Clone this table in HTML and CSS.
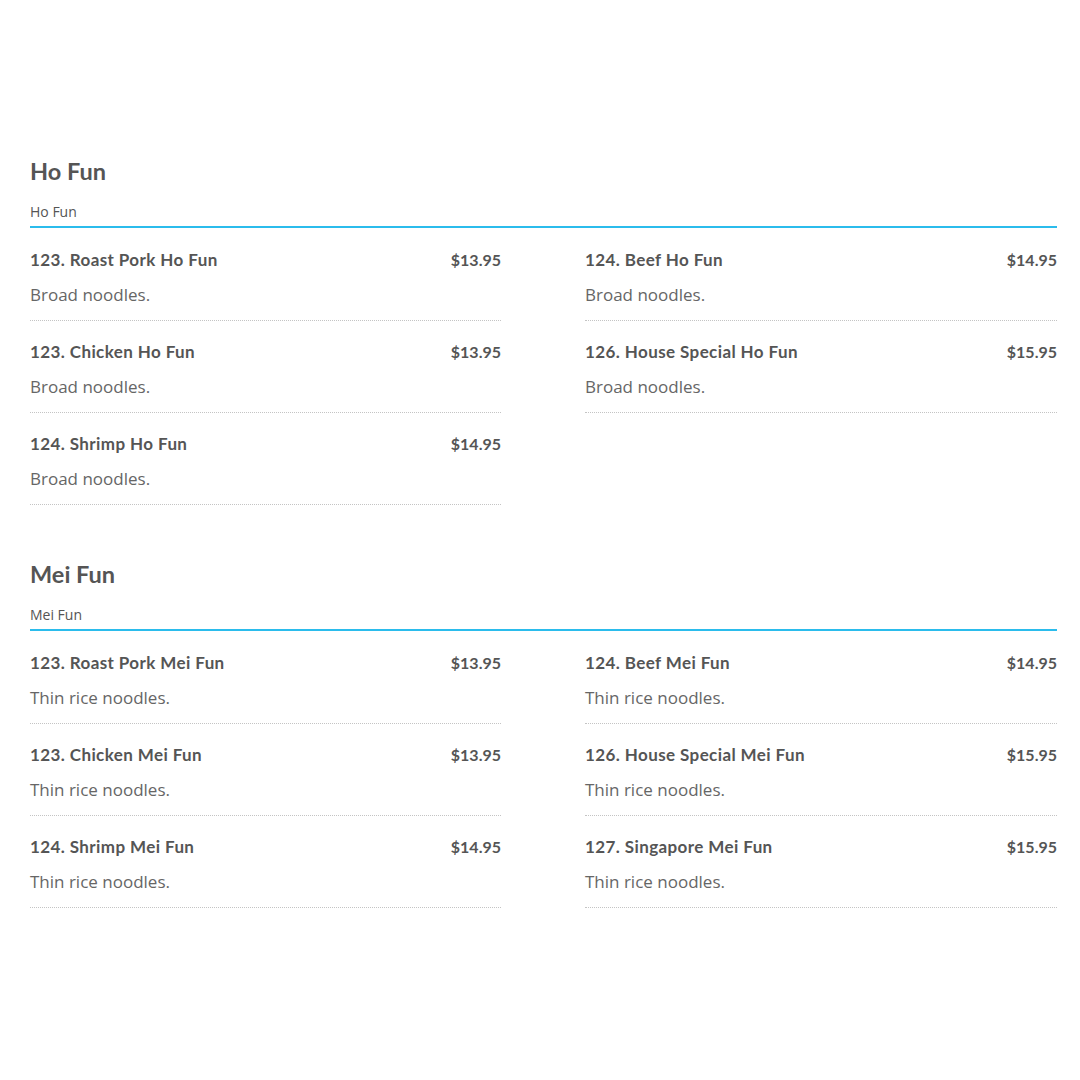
FILE: index.html
```html
<!DOCTYPE html>
<html>
<head>
<meta charset="utf-8">
<link rel="stylesheet" href="styles.css">
</head>
<body>
<main class="menu">
  <section class="category">
    <header class="cat-head">
      <h2 class="cat-title">Ho Fun</h2>
      <p class="cat-sub">Ho Fun</p>
    </header>
    <div class="items">
      <div class="item"><div class="item-top"><span class="item-name">123. Roast Pork Ho Fun</span><span class="item-price">$13.95</span></div><p class="item-desc">Broad noodles.</p></div>
      <div class="item"><div class="item-top"><span class="item-name">124. Beef Ho Fun</span><span class="item-price">$14.95</span></div><p class="item-desc">Broad noodles.</p></div>
      <div class="item"><div class="item-top"><span class="item-name">123. Chicken Ho Fun</span><span class="item-price">$13.95</span></div><p class="item-desc">Broad noodles.</p></div>
      <div class="item"><div class="item-top"><span class="item-name">126. House Special Ho Fun</span><span class="item-price">$15.95</span></div><p class="item-desc">Broad noodles.</p></div>
      <div class="item"><div class="item-top"><span class="item-name">124. Shrimp Ho Fun</span><span class="item-price">$14.95</span></div><p class="item-desc">Broad noodles.</p></div>
    </div>
  </section>
  <section class="category">
    <header class="cat-head">
      <h2 class="cat-title">Mei Fun</h2>
      <p class="cat-sub">Mei Fun</p>
    </header>
    <div class="items">
      <div class="item"><div class="item-top"><span class="item-name">123. Roast Pork Mei Fun</span><span class="item-price">$13.95</span></div><p class="item-desc">Thin rice noodles.</p></div>
      <div class="item"><div class="item-top"><span class="item-name">124. Beef Mei Fun</span><span class="item-price">$14.95</span></div><p class="item-desc">Thin rice noodles.</p></div>
      <div class="item"><div class="item-top"><span class="item-name">123. Chicken Mei Fun</span><span class="item-price">$13.95</span></div><p class="item-desc">Thin rice noodles.</p></div>
      <div class="item"><div class="item-top"><span class="item-name">126. House Special Mei Fun</span><span class="item-price">$15.95</span></div><p class="item-desc">Thin rice noodles.</p></div>
      <div class="item"><div class="item-top"><span class="item-name">124. Shrimp Mei Fun</span><span class="item-price">$14.95</span></div><p class="item-desc">Thin rice noodles.</p></div>
      <div class="item"><div class="item-top"><span class="item-name">127. Singapore Mei Fun</span><span class="item-price">$15.95</span></div><p class="item-desc">Thin rice noodles.</p></div>
    </div>
  </section>
</main>
</body>
</html>
```
FILE: styles.css
```css
html, body {
  margin: 0;
  padding: 0;
  background: #ffffff;
}
body {
  font-family: "Lato", "Noto Sans", sans-serif;
  color: #555555;
}
.menu {
  padding: 158px 23px 0 30px;
}
.category {
  margin-bottom: 56px;
}
.cat-head {
  border-bottom: 2px solid #2bbcec;
  padding-bottom: 6px;
}
.cat-title {
  margin: 0;
  font-size: 23.5px;
  line-height: 26px;
  font-weight: 700;
  color: #555555;
}
.cat-sub {
  margin: 19px 0 0;
  font-family: "Open Sans", "Noto Sans", sans-serif;
  font-size: 14px;
  line-height: 17px;
  color: #555555;
}
.items {
  display: grid;
  grid-template-columns: 471px 472px;
  column-gap: 84px;
  padding-top: 1px;
}
.item {
  padding: 21px 0 15px;
  border-bottom: 1px dotted #c4c4c4;
}
.item-top {
  display: flex;
  justify-content: space-between;
  align-items: center;
  height: 20px;
}
.item-name {
  font-size: 17px;
  line-height: 20px;
  font-weight: 700;
  letter-spacing: 0.4px;
  color: #555555;
}
.item-price {
  font-size: 16px;
  line-height: 20px;
  font-weight: 700;
  color: #555555;
}
.item-desc {
  margin: 15px 0 0;
  font-family: "Open Sans", "Noto Sans", sans-serif;
  font-size: 17px;
  line-height: 20px;
  color: #666666;
}
```
